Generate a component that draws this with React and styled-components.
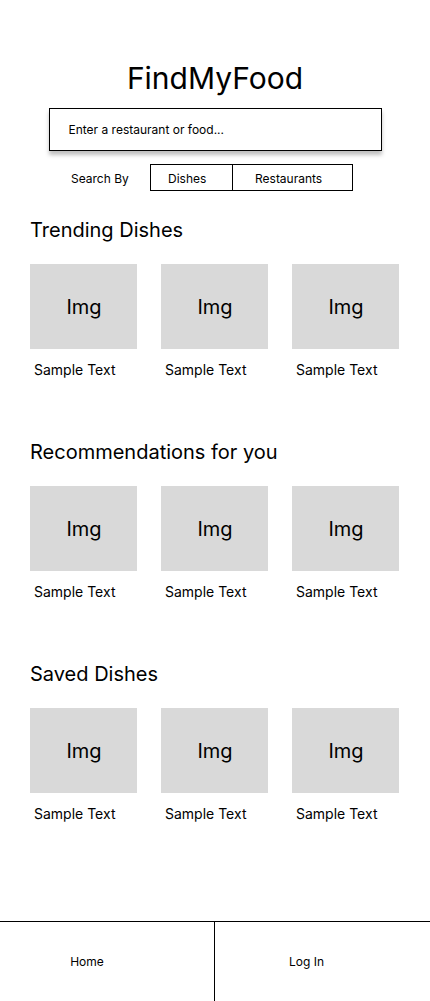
import React from "react";
import styled, { createGlobalStyle } from "styled-components";

const GlobalStyle = createGlobalStyle`
  body {
    margin: 0;
    font-family: Inter, "Liberation Sans", sans-serif;
    color: #000;
    background: #fff;
  }
`;

const Page = styled.div`
  min-height: 100vh;
  display: flex;
  flex-direction: column;
`;

const Header = styled.header`
  padding-top: 58px;
  display: flex;
  flex-direction: column;
  align-items: center;
`;

const Title = styled.h1`
  margin: 0;
  font-size: 30px;
  font-weight: 400;
  line-height: 40px;
`;

const SearchBox = styled.div`
  margin-top: 10px;
  width: 333px;
  height: 43px;
  box-sizing: border-box;
  border: 1px solid #000;
  box-shadow: 0 4px 4px rgba(0, 0, 0, 0.25);
  display: flex;
  align-items: center;
  padding-left: 19px;
  font-size: 12px;
`;

const SearchBy = styled.div`
  margin-top: 13px;
  display: flex;
  align-items: center;
  align-self: flex-start;
  padding-left: 71px;
`;

const Label = styled.span`
  font-size: 12px;
  width: 79px;
  padding-top: 2px;
`;

const Toggle = styled.div`
  display: flex;
  border: 1px solid #000;
  height: 27px;
  box-sizing: border-box;
`;

const ToggleButton = styled.div`
  width: ${(p) => p.$w}px;
  display: flex;
  align-items: center;
  padding: 2px 0 0 ${(p) => p.$pad}px;
  font-size: 12px;
  box-sizing: border-box;
  border-left: ${(p) => (p.$first ? "none" : "1px solid #000")};
`;

const Sections = styled.main`
  padding: 27px 30px 0;
  display: flex;
  flex-direction: column;
  gap: 60px;
`;

const Section = styled.section`
  display: flex;
  flex-direction: column;
`;

const Heading = styled.h2`
  margin: 0;
  font-size: 20px;
  font-weight: 400;
  line-height: 24px;
`;

const CardRow = styled.div`
  margin-top: 22px;
  display: flex;
  gap: 24px;
`;

const Card = styled.div`
  width: 107px;
  display: flex;
  flex-direction: column;
`;

const ImgBox = styled.div`
  height: 85px;
  background: #d9d9d9;
  display: flex;
  align-items: center;
  justify-content: center;
  padding-left: 1px;
  font-size: 20px;
`;

const Caption = styled.div`
  margin-top: 11px;
  padding-left: 4px;
  font-size: 14px;
  line-height: 20px;
`;

const Footer = styled.footer`
  margin-top: auto;
  height: 80px;
  box-sizing: border-box;
  border-top: 1px solid #000;
  display: flex;
`;

const NavItem = styled.div`
  flex: ${(p) => p.$w}px 0 0;
  width: ${(p) => p.$w}px;
  box-sizing: border-box;
  display: flex;
  align-items: center;
  justify-content: center;
  padding-right: ${(p) => p.$shift}px;
  font-size: 12px;
  border-right: ${(p) => (p.$divider ? "1px solid #000" : "none")};
`;

const sections = ["Trending Dishes", "Recommendations for you", "Saved Dishes"];

export default function App() {
  return (
    <Page>
      <GlobalStyle />
      <Header>
        <Title>FindMyFood</Title>
        <SearchBox>Enter a restaurant or food...</SearchBox>
        <SearchBy>
          <Label>Search By</Label>
          <Toggle>
            <ToggleButton $first $w={81} $pad={17}>Dishes</ToggleButton>
            <ToggleButton $w={120} $pad={22}>Restaurants</ToggleButton>
          </Toggle>
        </SearchBy>
      </Header>
      <Sections>
        {sections.map((s) => (
          <Section key={s}>
            <Heading>{s}</Heading>
            <CardRow>
              {[0, 1, 2].map((i) => (
                <Card key={i}>
                  <ImgBox>Img</ImgBox>
                  <Caption>Sample Text</Caption>
                </Card>
              ))}
            </CardRow>
          </Section>
        ))}
      </Sections>
      <Footer>
        <NavItem $w={215} $divider $shift={40}>Home</NavItem>
        <NavItem $w={215} $shift={32}>Log In</NavItem>
      </Footer>
    </Page>
  );
}
